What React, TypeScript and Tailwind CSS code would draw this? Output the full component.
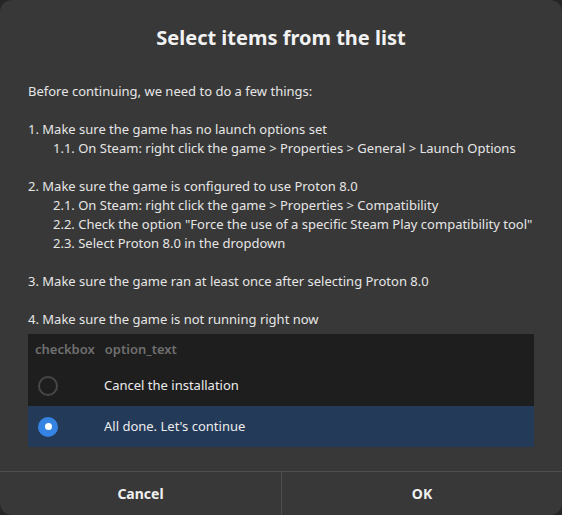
type Line = { text: string; indent?: boolean } | null

const LINES: Line[] = [
  { text: 'Before continuing, we need to do a few things:' },
  null,
  { text: '1. Make sure the game has no launch options set' },
  { text: '1.1. On Steam: right click the game > Properties > General > Launch Options', indent: true },
  null,
  { text: '2. Make sure the game is configured to use Proton 8.0' },
  { text: '2.1. On Steam: right click the game > Properties > Compatibility', indent: true },
  { text: '2.2. Check the option "Force the use of a specific Steam Play compatibility tool"', indent: true },
  { text: '2.3. Select Proton 8.0 in the dropdown', indent: true },
  null,
  { text: '3. Make sure the game ran at least once after selecting Proton 8.0' },
  null,
  { text: '4. Make sure the game is not running right now' },
]

const OPTIONS = ['Cancel the installation', "All done. Let's continue"]

function Radio({ checked }: { checked: boolean }) {
  if (checked) {
    return (
      <span className="flex h-[20px] w-[20px] items-center justify-center rounded-full bg-[#3584e4]">
        <span className="h-[7px] w-[7px] rounded-full bg-white" />
      </span>
    )
  }
  return <span className="block h-[20px] w-[20px] rounded-full border-2 border-[#474747]" />
}

export default function App() {
  const selected = 1

  return (
    <div
      className="h-[515px] w-[562px] bg-[#262626] text-white"
      style={{ fontFamily: '"Noto Sans", "Open Sans", sans-serif' }}
    >
      <div className="flex h-full flex-col overflow-hidden rounded-[12px] bg-[#383838]">
        {/* Title */}
        <h1 className="pt-[25px] text-center text-[20px] font-bold leading-[26px] text-[#f2f2f2]">
          Select items from the list
        </h1>

        {/* Instructions */}
        <div className="px-[28px] pt-[31px] text-[13px] leading-[19px] text-[#e6e6e6]">
          {LINES.map((line, i) =>
            line ? (
              <div key={i} className={line.indent ? 'pl-[25px]' : ''}>
                {line.text}
              </div>
            ) : (
              <div key={i} className="h-[19px]" />
            )
          )}
        </div>

        {/* List */}
        <div className="mx-[28px] mt-[5px] bg-[#1e1e1e] text-[13px]">
          <div className="flex h-[31px] items-center gap-[10px] px-[7px] font-semibold text-[#6f6f6f]">
            <span>checkbox</span>
            <span>option_text</span>
          </div>
          {OPTIONS.map((opt, i) => (
            <div
              key={opt}
              className={`flex h-[41px] items-center ${i === selected ? 'bg-[#243a59]' : ''}`}
            >
              <div className="w-[76px] pl-[10px]">
                <Radio checked={i === selected} />
              </div>
              <span className="text-[#ececec]">{opt}</span>
            </div>
          ))}
        </div>

        {/* Buttons */}
        <div className="mt-auto grid h-[44px] grid-cols-2 border-t border-[#4d4d4d] text-[14px] font-bold text-[#f0f0f0]">
          <button className="flex items-center justify-center">Cancel</button>
          <button className="flex items-center justify-center border-l border-[#4d4d4d]">OK</button>
        </div>
      </div>
    </div>
  )
}
